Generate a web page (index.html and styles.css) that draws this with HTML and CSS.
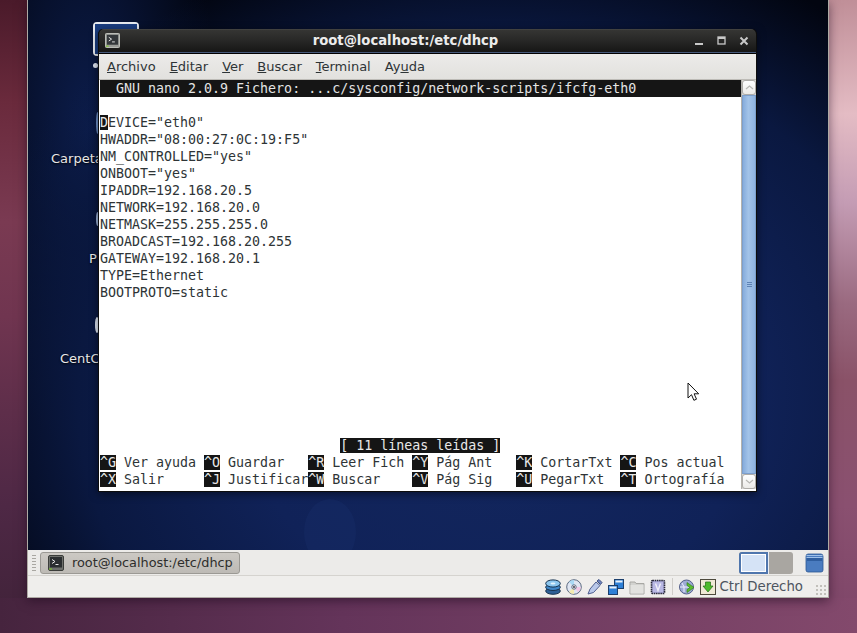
FILE: index.html
```html
<!DOCTYPE html>
<html lang="es">
<head>
<meta charset="utf-8">
<title>root@localhost:/etc/dhcp</title>
<link rel="stylesheet" href="styles.css">
</head>
<body>
<div class="vm">
  <div class="guest">
    <div class="orb"></div>
    <div class="desk-icon-sel"><div class="sel-inner"></div></div>
    <div class="glint g1"></div><div class="glint g2"></div><div class="glint g3"></div><div class="glint g4"></div>
    <span class="desk-label l1">Carpeta</span>
    <span class="desk-label l2">P</span>
    <span class="desk-label l3">CentC</span>

    <section class="term">
      <header class="titlebar">
        <svg class="term-icon tb" viewBox="0 0 16 16"><rect x="0.5" y="0.5" width="15" height="15" rx="1" fill="#9a9c98" stroke="#c4c6c0"/><rect x="2" y="2" width="12" height="10.5" fill="#33373a"/><path d="M4 4.5l3 2-3 2M7.5 9.5h3" stroke="#e8e8e8" fill="none"/><rect x="1" y="13.5" width="3" height="1" fill="#7ed321"/></svg>
        <h1 class="title">root@localhost:/etc/dhcp</h1>
        <div class="wm">
          <svg viewBox="0 0 10 10"><rect x="0" y="7" width="8" height="2" fill="#c8c8c8"/></svg>
          <svg viewBox="0 0 10 10"><rect x="1" y="1" width="7" height="7" fill="none" stroke="#c8c8c8" stroke-width="1.3"/><rect x="1" y="1" width="7" height="2" fill="#c8c8c8"/></svg>
          <svg viewBox="0 0 10 10"><path d="M1.5 1.5l7 7M8.5 1.5l-7 7" stroke="#c8c8c8" stroke-width="2"/></svg>
        </div>
      </header>
      <nav class="menu">
        <span><u>A</u>rchivo</span><span><u>E</u>ditar</span><span><u>V</u>er</span><span><u>B</u>uscar</span><span><u>T</u>erminal</span><span>Ay<u>u</u>da</span>
      </nav>
      <div class="term-body">
        <pre class="screen"><span class="bar">  GNU nano 2.0.9 Fichero: ...c/sysconfig/network-scripts/ifcfg-eth0</span>
<b class="inv">D</b>EVICE="eth0"
HWADDR="08:00:27:0C:19:F5"
NM_CONTROLLED="yes"
ONBOOT="yes"
IPADDR=192.168.20.5
NETWORK=192.168.20.0
NETMASK=255.255.255.0
BROADCAST=192.168.20.255
GATEWAY=192.168.20.1
TYPE=Ethernet
BOOTPROTO=static








                              <b class="inv">[ 11 líneas leídas ]</b>
<b class="inv">^G</b> Ver ayuda <b class="inv">^O</b> Guardar   <b class="inv">^R</b> Leer Fich <b class="inv">^Y</b> Pág Ant   <b class="inv">^K</b> CortarTxt <b class="inv">^C</b> Pos actual
<b class="inv">^X</b> Salir     <b class="inv">^J</b> Justificar<b class="inv">^W</b> Buscar    <b class="inv">^V</b> Pág Sig   <b class="inv">^U</b> PegarTxt  <b class="inv">^T</b> Ortografía</pre>
        <div class="scrollbar">
          <div class="arrow"><svg viewBox="0 0 9 5"><path d="M1 4l3.5-3 3.5 3" fill="none" stroke="#b8b8b4" stroke-width="1.2"/></svg></div>
          <div class="thumb"><i></i><i></i><i></i></div>
          <div class="arrow"><svg viewBox="0 0 9 5"><path d="M1 1l3.5 3 3.5-3" fill="none" stroke="#b8b8b4" stroke-width="1.2"/></svg></div>
        </div>
      </div>
    </section>

    <svg class="cursor" viewBox="0 0 13 20"><path d="M1 1v15l3.5-3.3 2.4 5.6 2.6-1.1-2.4-5.4h4.6z" fill="#fff" stroke="#111" stroke-width="1"/></svg>
  </div>

  <div class="taskbar">
    <div class="grip"></div>
    <button class="task">
      <svg class="task-icon" viewBox="0 0 16 16"><rect x="0.5" y="0.5" width="15" height="15" rx="1.5" fill="#6f716d" stroke="#3b3d3a"/><rect x="2" y="2" width="12" height="10.5" fill="#2b2e30"/><path d="M4 4.5l3 2-3 2M7.5 9.5h3" stroke="#e8e8e8" fill="none"/><rect x="1" y="13.5" width="3" height="1" fill="#7ed321"/></svg>
      root@localhost:/etc/dhcp
    </button>
    <div class="spacer"></div>
    <div class="pager"><div class="ws active"><i></i></div><div class="ws"></div></div>
    <svg class="trash" viewBox="0 0 20 20"><path d="M2 3.5Q2 1 4 1h13q2 0 2 2.5V17q0 2-2 2H4q-2 0-2-2z" fill="#4a7cc0" stroke="#2b5592" stroke-width="0.8"/><path d="M2.5 2.5h16" stroke="#9fc0e8" stroke-width="1"/><path d="M2.5 4.5h16" stroke="#9fc0e8" stroke-width="1"/><path d="M3 5h15v3H3z" fill="#2f5e9f"/></svg>
  </div>

  <footer class="status">
    <svg class="st" viewBox="0 0 16 16"><ellipse cx="8" cy="12" rx="7.3" ry="3.3" fill="#2d5f96" stroke="#16324f"/><ellipse cx="8" cy="8.2" rx="7.3" ry="3.3" fill="#3f86c7" stroke="#16324f"/><ellipse cx="8" cy="4.5" rx="7.3" ry="3.6" fill="#8cc6ee" stroke="#16324f"/><ellipse cx="8" cy="4.5" rx="2.5" ry="1.1" fill="#e4f3fc"/></svg>
    <svg class="st" viewBox="0 0 16 16"><circle cx="8" cy="8" r="7.3" fill="#dfe6f2" stroke="#5c6a80"/><path d="M8 8L3 3A7 7 0 0 1 8 1z" fill="#a9d9f5"/><path d="M8 8L15 8A7 7 0 0 1 12 13z" fill="#f3c7e4"/><path d="M8 8L3 13A7 7 0 0 0 8 15z" fill="#f4ecb0"/><circle cx="8" cy="8" r="2.2" fill="#fff" stroke="#5c6a80"/><circle cx="8" cy="8" r="0.9" fill="#223"/></svg>
    <svg class="st" viewBox="0 0 16 16"><path d="M1 15l2-5 6-7 4 3.5-6.5 7z" fill="#b9c8ea" stroke="#4f5f8f"/><path d="M10 2l2-1.5 3 3L13.5 5.5z" fill="#6f86c0" stroke="#3f4f7f"/></svg>
    <svg class="st" viewBox="0 0 16 16"><rect x="6.5" y="0.5" width="9" height="9" fill="#2d7fd6" stroke="#1c3f6c"/><rect x="7.5" y="1.5" width="7" height="2" fill="#e8f0f8"/><rect x="0.5" y="6.5" width="9" height="9" fill="#2d7fd6" stroke="#1c3f6c"/><rect x="1.5" y="7.5" width="7" height="2" fill="#e8f0f8"/></svg>
    <svg class="st" viewBox="0 0 16 16"><path d="M1 4.5V3h5l1 1.5h8V15H1z" fill="#d2d2cf" stroke="#a8a8a4"/><rect x="1.5" y="6" width="13" height="8.5" fill="#e2e2df"/></svg>
    <svg class="st" viewBox="0 0 16 16"><rect x="1.5" y="1.5" width="13" height="13" rx="1" fill="#a9a8d8" stroke="#2a2a3a" stroke-width="1.6" stroke-dasharray="1.5 .7"/><rect x="3" y="3" width="10" height="10" fill="#b9b8e4"/><path d="M5.5 4.5l2.5 7 2.5-7" fill="none" stroke="#f0f0fa" stroke-width="1.4"/></svg>
    <div class="sep"></div>
    <svg class="st" viewBox="0 0 16 16"><circle cx="7.5" cy="8" r="7" fill="#9eabd6" stroke="#55608a"/><path d="M3 4q3 3 2 9M1 8h9" stroke="#eef" fill="none"/><path d="M8 3.5l7 5-7 5V10.5l3-2-3-2z" fill="#5bbb30" stroke="#2a7a12" stroke-width="0.6"/></svg>
    <svg class="st" viewBox="0 0 16 16"><rect x="0.5" y="0.5" width="15" height="15" fill="#efe9d6" stroke="#4d4a3c"/><path d="M5.5 3h5v4H13l-5 6-5-6h2.5z" fill="#4dbb2c" stroke="#1f6d12" stroke-width="0.7"/></svg>
    <span class="hostkey">Ctrl Derecho</span>
    <div class="resize"></div>
  </footer>
</div>
</body>
</html>
```

FILE: styles.css
```css
* { box-sizing: border-box; }
html, body { margin: 0; height: 100%; }
body {
  width: 857px;
  height: 633px;
  overflow: hidden;
  position: relative;
  font-family: "DejaVu Sans", sans-serif;
  background-color: #6a3558;
  background-repeat: no-repeat;
  background-image:
    linear-gradient(90deg, #46243e, #64345a 40%, #83496c 100%),
    linear-gradient(180deg, #4a1a2a 0, #6a2a3c 16%, #7a3a52 35%, #703550 50%, #5e2e4a 65%, #4e2845 80%, #3f2238 100%),
    linear-gradient(180deg, #c08f98 0, #e4bcc4 18%, #c49cb4 32%, #9a6a80 48%, #8a5268 60%, #8a5070 80%, #7d4568 100%);
  background-size: 100% 35px, 27px 100%, 28px 100%;
  background-position: 0 598px, 0 0, 829px 0;
}
.vm {
  position: absolute;
  left: 27px;
  top: 0;
  width: 802px;
  height: 598px;
  display: flex;
  flex-direction: column;
  background: #efeeec;
  border: 1px solid #aeaaa4;
  border-top: 0;
  box-shadow: 0 3px 10px rgba(30,10,30,.55);
}
.guest {
  position: relative;
  height: 550px;
  overflow: hidden;
  background:
    radial-gradient(ellipse 560px 480px at 470px 400px, #13275f 0, #102258 45%, #0a1840 75%, rgba(3,8,28,0) 100%),
    radial-gradient(ellipse 130px 320px at 60px 130px, #0c1d4c 0, rgba(12,29,76,0) 100%),
    #020510;
}
.orb {
  position: absolute;
  left: 276px;
  top: 499px;
  width: 52px;
  height: 66px;
  border-radius: 50%;
  background: rgba(40,70,140,.12);
}
.desk-icon-sel {
  position: absolute;
  left: 65px;
  top: 22px;
  width: 46px;
  height: 34px;
  border: 2px solid #e8ebf0;
  border-radius: 4px;
}
.sel-inner { height: 100%; background: #1a3d80; }
.glint { position: absolute; background: #dfe6f2; border-radius: 50%; }
.g1 { left: 65px; top: 63px; width: 5px; height: 5px; }
.g2 { left: 68px; top: 112px; width: 3px; height: 22px; background: #6d90c8; }
.g3 { left: 68px; top: 212px; width: 3px; height: 14px; background: #9fb5da; }
.g4 { left: 67px; top: 317px; width: 4px; height: 16px; }
.desk-label {
  position: absolute;
  color: #e8e8e8;
  font-size: 13px;
  line-height: 16px;
  text-shadow: 0 1px 2px #000;
}
.l1 { left: 23px; top: 151px; }
.l2 { left: 61px; top: 251px; }
.l3 { left: 32px; top: 351px; }

.term {
  position: absolute;
  left: 70px;
  top: 29px;
  width: 659px;
  height: 463px;
  display: flex;
  flex-direction: column;
  background: #000;
  border-radius: 5px 5px 0 0;
  border: 1px solid #0d0d0d;
  border-top: 0;
  box-shadow: 0 2px 8px rgba(0,0,0,.5);
}
.titlebar {
  height: 24px;
  flex: none;
  display: flex;
  align-items: center;
  position: relative;
  padding: 0 7px 0 6px;
  border-radius: 5px 5px 0 0;
  background: linear-gradient(180deg, #4a4a48 0, #353533 5%, #262625 55%, #161615 100%);
  border-bottom: 1px solid #46597a;
}
.term-icon.tb { width: 15px; height: 15px; }
.title {
  position: absolute;
  left: 0;
  right: 44px;
  margin: 0;
  text-align: center;
  font-size: 13.2px;
  font-weight: bold;
  color: #ececec;
  line-height: 24px;
}
.wm { margin-left: auto; display: flex; gap: 12px; }
.wm svg { width: 10px; height: 10px; display: block; }
.menu {
  height: 26px;
  flex: none;
  margin-top: 1px;
  display: flex;
  align-items: center;
  gap: 14px;
  padding: 0 0 0 8px;
  font-size: 13px;
  color: #2e3436;
  background: linear-gradient(180deg, #ecebe9 0, #e2e1de 100%);
  border-bottom: 1px solid #bdbbb6;
}
.menu span { display: block; }
.term-body {
  flex: 1;
  display: flex;
  background: #fff;
  padding: 0 0 0 1px;
  min-height: 0;
}
.screen {
  flex: 1;
  margin: 0;
  padding: 0;
  font-family: "DejaVu Sans Mono", monospace;
  font-size: 13.302px;
  line-height: 17px;
  color: #2e3436;
}
.bar { display: block; background: #151515; color: #e4e4e4; height: 17px; }
.inv { font-weight: normal; background: #151515; color: #e8e8e8; }
.scrollbar {
  width: 15px;
  flex: none;
  margin-bottom: 2px;
  display: flex;
  flex-direction: column;
  background: #d8d6d2;
  border-left: 1px solid #b5b3ae;
}
.arrow {
  height: 15px;
  flex: none;
  display: flex;
  align-items: center;
  justify-content: center;
  background: linear-gradient(180deg, #fff, #ebeae7);
  border: 1px solid #aeaca8;
  border-radius: 3px;
}
.arrow svg { width: 9px; height: 5px; }
.thumb {
  flex: 1;
  display: flex;
  flex-direction: column;
  align-items: center;
  justify-content: center;
  gap: 1px;
  background: linear-gradient(90deg, #86acdc, #a3c3e8 45%, #8fb4e0);
  border: 1px solid #7d9fcc;
}
.thumb i { width: 5px; height: 1px; background: #5e83b5; }
.cursor {
  position: absolute;
  left: 659px;
  top: 382px;
  width: 13px;
  height: 20px;
}
.taskbar {
  height: 26px;
  flex: none;
  display: flex;
  align-items: center;
  padding: 0 4px 0 4px;
  background: #ecebe9;
  border-bottom: 1px solid #d5d3cf;
}
.grip {
  width: 4px;
  height: 18px;
  background-image: radial-gradient(#a9a7a2 0.7px, transparent 0.8px);
  background-size: 2px 3px;
  margin-right: 4px;
}
.task {
  display: flex;
  align-items: center;
  gap: 8px;
  width: 200px;
  height: 22px;
  padding: 0 0 0 7px;
  font: 12.85px "DejaVu Sans", sans-serif;
  color: #2e2e2c;
  background: linear-gradient(180deg, #ccc9c4, #bdbab5);
  border: 1px solid #9b9994;
  border-radius: 3px;
  white-space: nowrap;
}
.task-icon { width: 16px; height: 16px; flex: none; }
.spacer { flex: 1; }
.pager {
  display: flex;
  width: 54px;
  height: 22px;
  border-radius: 3px;
  overflow: hidden;
  background: #a9a6a1;
  margin-right: 11px;
}
.ws { flex: 1; }
.ws.active { background: #4f76ad; padding: 2px; border-right: 1px solid #e9eef6; }
.ws.active i { display: block; height: 100%; background: #d5e3f6; border: 1px solid #fff; }
.trash { width: 20px; height: 20px; flex: none; margin-right: 0; }
.status {
  flex: 1;
  display: flex;
  align-items: center;
  justify-content: flex-end;
  gap: 5px;
  padding: 0 2px 0 0;
  background: #efeeec;
}
.st { width: 16px; height: 16px; flex: none; }
.sep { width: 1px; height: 17px; background: #cfcdc9; margin: 0 1px; }
.hostkey { font-size: 13.3px; color: #4d5560; margin-left: -2px; }
.resize {
  width: 11px;
  height: 11px;
  margin-left: 7px;
  align-self: flex-end;
  margin-bottom: 2px;
  background-image: radial-gradient(#c2c0bb 0.8px, transparent 0.9px);
  background-size: 4px 4px;
}
```
